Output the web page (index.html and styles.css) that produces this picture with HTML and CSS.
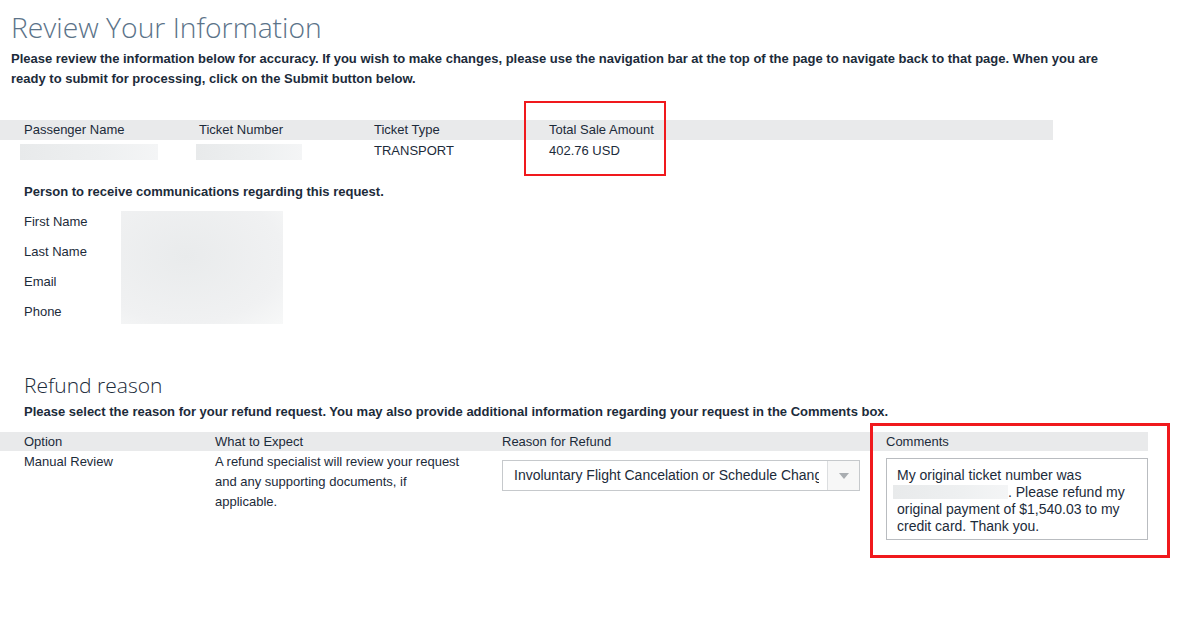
FILE: index.html
```html
<!DOCTYPE html>
<html>
<head>
<meta charset="utf-8">
<link rel="stylesheet" href="styles.css">
</head>
<body>
<div class="page">
  <h1 class="title">Review Your Information</h1>
  <p class="intro">Please review the information below for accuracy. If you wish to make changes, please use the navigation bar at the top of the page to navigate back to that page. When you are ready to submit for processing, click on the Submit button below.</p>

  <div class="ticket">
    <div class="ticket-head">
      <div>Passenger Name</div>
      <div>Ticket Number</div>
      <div>Ticket Type</div>
      <div>Total Sale Amount</div>
    </div>
    <div class="ticket-row">
      <div><span class="blur blur-name"></span></div>
      <div><span class="blur blur-num"></span></div>
      <div>TRANSPORT</div>
      <div>402.76 USD</div>
    </div>
    <div class="mark mark-amount"></div>
  </div>

  <div class="contact">
    <div class="contact-title">Person to receive communications regarding this request.</div>
    <div class="contact-body">
      <div class="contact-labels">
        <div>First Name</div>
        <div>Last Name</div>
        <div>Email</div>
        <div>Phone</div>
      </div>
      <div class="blur blur-contact"></div>
    </div>
  </div>

  <div class="refund">
    <h2 class="refund-title">Refund reason</h2>
    <div class="refund-intro">Please select the reason for your refund request. You may also provide additional information regarding your request in the Comments box.</div>
    <div class="refund-table">
      <div class="refund-head">
        <div>Option</div>
        <div>What to Expect</div>
        <div>Reason for Refund</div>
        <div>Comments</div>
      </div>
      <div class="refund-row">
        <div>Manual Review</div>
        <div class="expect">A refund specialist will review your request and any supporting documents, if applicable.</div>
        <div>
          <div class="select">
            <span class="select-text">Involuntary Flight Cancelation or Schedule Change</span>
            <span class="select-arrow"><svg width="10" height="6" viewBox="0 0 10 6"><path d="M0 0h10L5 6z" fill="#a9adb1"/></svg></span>
          </div>
        </div>
        <div>
          <div class="comments">My original ticket number was <span class="blur blur-inline"></span>. Please refund my original payment of $1,540.03 to my credit card. Thank you.</div>
        </div>
      </div>
      <div class="mark mark-comments"></div>
    </div>
  </div>
</div>
</body>
</html>
```

FILE: styles.css
```css
html, body {
  margin: 0;
  padding: 0;
  background: #fff;
}
body {
  font-family: "Liberation Sans", Arial, sans-serif;
  color: #1c2b3a;
  font-size: 13px;
}
.page {
  width: 1200px;
  height: 621px;
  overflow: hidden;
}
.title {
  margin: 0;
  padding: 9px 0 0 11px;
  font-family: "Open Sans", sans-serif;
  font-weight: 300;
  font-size: 28.3px;
  line-height: 36px;
  color: #5b7389;
}
.intro {
  margin: 4px 0 0 11px;
  width: 1122px;
  font-weight: bold;
  font-size: 13px;
  line-height: 20px;
  color: #1c2b3a;
}
.ticket {
  position: relative;
  margin-top: 31px;
  width: 1053px;
}
.ticket-head, .ticket-row {
  display: grid;
  grid-template-columns: 175px 175px 175px 175px;
  padding-left: 24px;
}
.ticket-head {
  background: #e9eaeb;
  height: 20px;
  line-height: 20px;
}
.ticket-row {
  height: 22px;
  line-height: 22px;
}
.blur {
  display: inline-block;
  background: linear-gradient(90deg, #e8eaeb, #eef0f1 60%, #f4f5f6);
}
.blur-name {
  width: 138px;
  height: 16px;
  margin-left: -4px;
  vertical-align: middle;
}
.blur-num {
  width: 106px;
  height: 16px;
  margin-left: -3px;
  vertical-align: middle;
}
.mark {
  position: absolute;
  border: 2px solid #f0191d;
  box-sizing: border-box;
}
.mark-amount {
  left: 524px;
  top: -19px;
  width: 142px;
  height: 75px;
}
.contact {
  margin-top: 20px;
  padding-left: 24px;
}
.contact-title {
  font-weight: bold;
  line-height: 20px;
}
.contact-body {
  display: flex;
  margin-top: 9px;
}
.contact-labels {
  width: 97px;
  line-height: 30px;
  margin-top: -4px;
}
.blur-contact {
  display: block;
  width: 162px;
  height: 113px;
  background: radial-gradient(ellipse at 40% 40%, #e9ebec, #f0f1f2 70%, #f7f8f8);
}
.refund {
  margin-top: 45px;
}
.refund-title {
  margin: 0 0 0 24px;
  font-family: "Open Sans", sans-serif;
  font-weight: 300;
  font-size: 21px;
  line-height: 26px;
  color: #1c2b3a;
}
.refund-intro {
  margin: 5px 0 0 24px;
  font-weight: bold;
  line-height: 18px;
}
.refund-table {
  position: relative;
  margin-top: 11px;
  width: 1148px;
}
.refund-head, .refund-row {
  display: grid;
  grid-template-columns: 191px 287px 384px 262px;
  padding-left: 24px;
}
.refund-head {
  background: #e9eaeb;
  height: 19px;
  line-height: 19px;
}
.refund-row {
  line-height: 20px;
  padding-top: 1px;
}
.expect {
  width: 248px;
}
.select {
  display: flex;
  width: 358px;
  height: 31px;
  box-sizing: border-box;
  border: 1px solid #c6c9cc;
  margin-top: 8px;
  font-size: 14px;
  background: #fff;
}
.select-text {
  flex: 1;
  overflow: hidden;
  white-space: nowrap;
  padding-left: 11px;
  margin-right: 8px;
  line-height: 29px;
}
.select-arrow {
  width: 31px;
  border-left: 1px solid #dcdee0;
  background: #f7f7f7;
  display: flex;
  align-items: center;
  justify-content: center;
}
.comments {
  width: 262px;
  height: 82px;
  box-sizing: border-box;
  border: 1px solid #b9bcc0;
  margin-top: 6px;
  padding: 8px 10px;
  font-size: 14px;
  line-height: 17px;
}
.blur-inline {
  width: 115px;
  height: 14px;
  vertical-align: -2px;
  margin-left: -4px;
}
.mark-comments {
  border-width: 3px;
  left: 870px;
  top: -9px;
  width: 300px;
  height: 135px;
}
```
